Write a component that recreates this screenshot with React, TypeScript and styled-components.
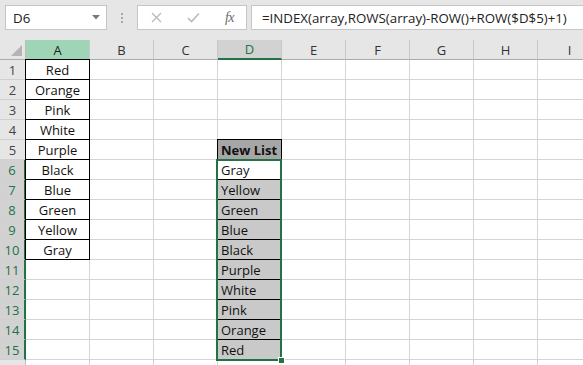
import React from "react";
import styled, { createGlobalStyle, css } from "styled-components";

const GlobalStyle = createGlobalStyle`
  html, body { margin: 0; padding: 0; background: #ffffff; overflow: hidden; }
  body { font-family: "Open Sans", "Liberation Sans", sans-serif; }
  * { box-sizing: border-box; }
`;

const GREEN = "#217346";
const GRID = "#d4d4d4";

const Page = styled.div`
  width: 583px;
  height: 365px;
  overflow: hidden;
  background: #fff;
`;

const Toolbar = styled.div`
  height: 40px;
  background: #e6e6e6;
  display: flex;
  align-items: flex-start;
  padding: 5px 0 0 5px;
`;

const NameBox = styled.div`
  width: 102px;
  height: 25px;
  background: #fff;
  border: 1px solid #c6c6c6;
  display: flex;
  align-items: center;
  justify-content: space-between;
  padding: 0 6px 0 7px;
  font-size: 13.3px;
  color: #222;
`;

const Grip = styled.div`
  width: 30px;
  height: 25px;
  display: flex;
  flex-direction: column;
  align-items: center;
  justify-content: center;
  gap: 2px;
`;

const Dot = styled.span`
  width: 2px;
  height: 2px;
  background: #a8a8a8;
`;

const FxBox = styled.div`
  width: 110px;
  height: 25px;
  background: #fff;
  border: 1px solid #c6c6c6;
  display: flex;
  align-items: center;
  padding: 0 12px 0 13px;
  justify-content: space-between;
`;

const FxLabel = styled.span`
  font-family: "Liberation Serif", "DejaVu Serif", serif;
  font-style: italic;
  font-size: 14px;
  color: #6a6a6a;
  letter-spacing: -0.5px;
`;

const FormulaBox = styled.div`
  flex: 1;
  height: 25px;
  margin-left: 4px;
  background: #fff;
  border: 1px solid #c6c6c6;
  border-right: none;
  display: flex;
  align-items: center;
  padding-left: 10px;
  font-size: 13.3px;
  color: #222;
  white-space: nowrap;
  overflow: hidden;
`;

const Sheet = styled.div`
  position: relative;
  display: grid;
  grid-template-columns: 26px repeat(9, 64px);
  grid-auto-rows: 20px;
`;

const Corner = styled.div`
  background: #e6e6e6;
  border-right: 1px solid #bdbdbd;
  border-bottom: 1px solid #ababab;
  display: flex;
  align-items: flex-end;
  justify-content: flex-end;
  padding: 0 3px 3px 0;
`;

type HeadKind = "normal" | "active" | "marked";

const ColHead = styled.div<{ $kind: HeadKind }>`
  background: #e6e6e6;
  border-right: 1px solid #c8c8c8;
  border-bottom: 1px solid #ababab;
  display: flex;
  align-items: center;
  justify-content: center;
  font-size: 13px;
  color: #333;
  ${(p) =>
    p.$kind === "active" &&
    css`
      background: #d2d2d2;
      color: ${GREEN};
      border-bottom: 2px solid ${GREEN};
    `}
  ${(p) =>
    p.$kind === "marked" &&
    css`
      background: #9fd5b7;
      color: #222;
    `}
`;

const RowHead = styled.div<{ $active: boolean }>`
  background: #e6e6e6;
  border-right: 1px solid #bdbdbd;
  border-bottom: 1px solid #d0d0d0;
  display: flex;
  align-items: center;
  justify-content: center;
  font-size: 13px;
  color: #444;
  ${(p) =>
    p.$active &&
    css`
      background: #d2d2d2;
      color: ${GREEN};
      border-right: 2px solid ${GREEN};
    `}
`;

const Cell = styled.div<{ $align: "left" | "center"; $fill?: string; $boxed?: boolean; $bold?: boolean }>`
  position: relative;
  background: ${(p) => p.$fill || "#fff"};
  border-right: 1px solid ${GRID};
  border-bottom: 1px solid ${GRID};
  display: flex;
  align-items: center;
  justify-content: ${(p) => (p.$align === "center" ? "center" : "flex-start")};
  padding: 1px 3px 0 3px;
  font-family: "Open Sans", "Liberation Sans", sans-serif;
  font-size: 13px;
  font-weight: ${(p) => (p.$bold ? 700 : 400)};
  color: #111;
  white-space: nowrap;
  ${(p) =>
    p.$boxed &&
    css`
      &::after {
        content: "";
        position: absolute;
        left: -1px;
        top: -1px;
        right: -1px;
        bottom: -1px;
        border: 1px solid #000;
        pointer-events: none;
        z-index: 1;
      }
    `}
`;

const Selection = styled.div`
  position: absolute;
  left: 216px;
  top: 119px;
  width: 66px;
  height: 202px;
  border: 2px solid ${GREEN};
  pointer-events: none;
  z-index: 2;
`;

const FillHandle = styled.div`
  position: absolute;
  right: -5px;
  bottom: -5px;
  width: 7px;
  height: 7px;
  background: ${GREEN};
  border: 1px solid #fff;
`;

const columns = ["A", "B", "C", "D", "E", "F", "G", "H", "I"];
const listA = ["Red", "Orange", "Pink", "White", "Purple", "Black", "Blue", "Green", "Yellow", "Gray"];
const listD = ["Gray", "Yellow", "Green", "Blue", "Black", "Purple", "White", "Pink", "Orange", "Red"];

function cellFor(row: number, col: number) {
  if (col === 0 && row >= 1 && row <= 10) {
    return { text: listA[row - 1], align: "center" as const, boxed: true };
  }
  if (col === 3 && row === 5) {
    return { text: "New List", align: "left" as const, boxed: true, bold: true, fill: "#a6a6a6" };
  }
  if (col === 3 && row >= 6 && row <= 15) {
    return {
      text: listD[row - 6],
      align: "left" as const,
      boxed: true,
      fill: row === 6 ? "#ffffff" : "#c9c9c9",
    };
  }
  return { text: "", align: "left" as const };
}

export default function App() {
  const rows = Array.from({ length: 16 }, (_, i) => i + 1);
  return (
    <Page>
      <GlobalStyle />
      <Toolbar>
        <NameBox>
          <span>D6</span>
          <svg width="8" height="5" viewBox="0 0 8 5">
            <path d="M0 0 L8 0 L4 4.5 Z" fill="#7a7a7a" />
          </svg>
        </NameBox>
        <Grip>
          <Dot />
          <Dot />
          <Dot />
        </Grip>
        <FxBox>
          <svg width="11" height="11" viewBox="0 0 11 11">
            <path d="M1 1 L10 10 M10 1 L1 10" stroke="#b9b9b9" strokeWidth="1.3" fill="none" />
          </svg>
          <svg width="13" height="11" viewBox="0 0 13 11">
            <path d="M1 6 L4.5 9.5 L12 1.5" stroke="#b9b9b9" strokeWidth="1.6" fill="none" />
          </svg>
          <FxLabel>fx</FxLabel>
        </FxBox>
        <FormulaBox>=INDEX(array,ROWS(array)-ROW()+ROW($D$5)+1)</FormulaBox>
      </Toolbar>
      <Sheet>
        <Corner>
          <svg width="11" height="11" viewBox="0 0 11 11">
            <path d="M11 0 L11 11 L0 11 Z" fill="#b4b4b4" />
          </svg>
        </Corner>
        {columns.map((c) => (
          <ColHead key={c} $kind={c === "D" ? "active" : c === "A" ? "marked" : "normal"}>
            {c}
          </ColHead>
        ))}
        {rows.map((r) => (
          <React.Fragment key={r}>
            <RowHead $active={r >= 6 && r <= 15}>{r <= 15 ? r : ""}</RowHead>
            {columns.map((c, ci) => {
              const info = cellFor(r, ci);
              return (
                <Cell
                  key={c}
                  $align={info.align}
                  $boxed={"boxed" in info ? info.boxed : false}
                  $bold={"bold" in info ? info.bold : false}
                  $fill={"fill" in info ? info.fill : undefined}
                >
                  {info.text}
                </Cell>
              );
            })}
          </React.Fragment>
        ))}
        <Selection>
          <FillHandle />
        </Selection>
      </Sheet>
    </Page>
  );
}
